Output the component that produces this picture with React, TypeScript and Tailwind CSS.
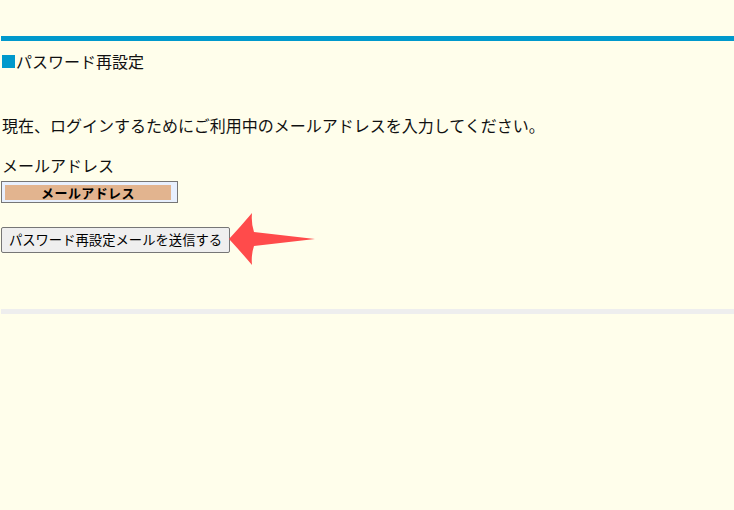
export default function App() {
  return (
    <div className="min-h-[510px] w-[734px] overflow-hidden bg-[#fffeeb] pl-px pt-[36px] text-[16px] text-[#111] [font-family:'Noto_Sans_CJK_JP',sans-serif]">
      <div className="h-[5px] bg-[#0099cc]" />
      <h2 className="mt-[8px] flex h-[24px] items-center pl-px text-[16px] font-normal leading-[24px]">
        <span className="mr-px inline-block h-[13px] w-[13px] bg-[#0099cc]" />
        パスワード再設定
      </h2>

      <p className="mt-[40px] pl-px leading-[24px]">
        現在、ログインするためにご利用中のメールアドレスを入力してください。
      </p>

      <div className="mt-[16px] pl-px leading-[24px]">メールアドレス</div>
      <div className="mt-[4px] flex h-[22px] w-[177px] items-center border border-[#767676] bg-[#e8f0fe] pl-[3px]">
        <div className="flex h-[15px] w-[166px] items-center justify-center bg-[#e2b48f] text-[13px] font-bold leading-none tracking-[0.4px] text-black">
          メールアドレス
        </div>
      </div>

      <div className="relative mt-[24px] flex items-center">
        <button className="h-[26px] w-[229px] rounded-[2px] border border-[#767676] bg-[#efefef] px-[6px] text-[13.33px] leading-none text-black">
          パスワード再設定メールを送信する
        </button>
        <svg className="absolute left-[226px] top-[-15px]" width="92" height="54" viewBox="0 0 92 54">
          <path d="M2 27 Q14 14 25 1 Q24 11 27 20 L88 27 L27 34 Q24 43 25 53 Q14 40 2 27 Z" fill="#ff4b4b" />
        </svg>
      </div>

      <div className="mt-[56px] h-[5px] bg-[#eeeeee]" />
    </div>
  )
}
